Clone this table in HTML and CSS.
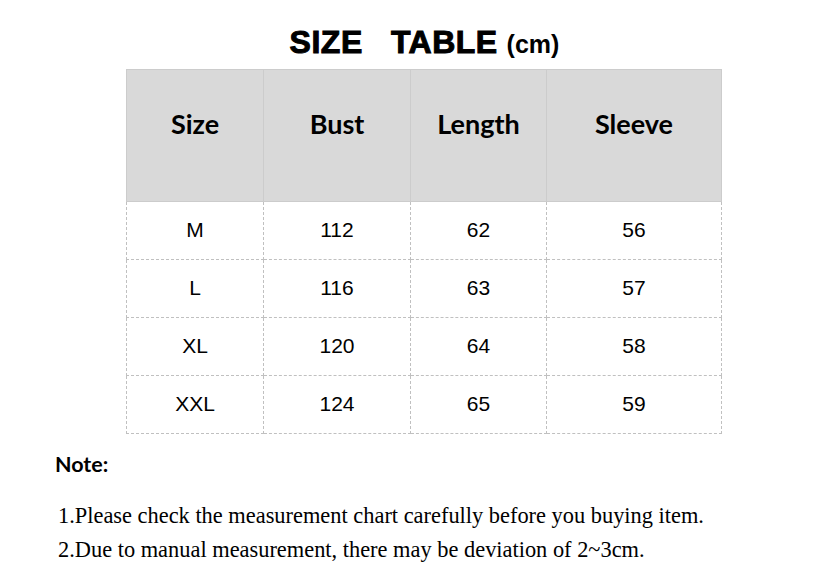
FILE: index.html
```html
<!DOCTYPE html>
<html>
<head>
<meta charset="utf-8">
<link rel="stylesheet" href="styles.css">
</head>
<body>
<div class="page">
  <h1 class="title"><span class="big">SIZE&nbsp;&nbsp;&nbsp;TABLE</span> <span class="unit">(cm)</span></h1>
  <table class="size-table">
    <colgroup>
      <col class="c1"><col class="c2"><col class="c3"><col class="c4">
    </colgroup>
    <thead>
      <tr><th>Size</th><th>Bust</th><th>Length</th><th>Sleeve</th></tr>
    </thead>
    <tbody>
      <tr><td>M</td><td>112</td><td>62</td><td>56</td></tr>
      <tr><td>L</td><td>116</td><td>63</td><td>57</td></tr>
      <tr><td>XL</td><td>120</td><td>64</td><td>58</td></tr>
      <tr><td>XXL</td><td>124</td><td>65</td><td>59</td></tr>
    </tbody>
  </table>
  <div class="note-title">Note:</div>
  <p class="note-line first">1.Please check the measurement chart carefully before you buying item.</p>
  <p class="note-line">2.Due to manual measurement, there may be deviation of 2~3cm.</p>
</div>
</body>
</html>
```

FILE: styles.css
```css
html, body {
  margin: 0;
  padding: 0;
  background: #ffffff;
}
.page {
  width: 823px;
  height: 576px;
  overflow: hidden;
}
.title {
  margin: 0 0 7px 0;
  padding: 22px 0 0 26px;
  height: 62px;
  box-sizing: border-box;
  text-align: center;
  font-family: "Liberation Sans", Arial, sans-serif;
  font-weight: bold;
  color: #000;
  line-height: 40px;
  white-space: nowrap;
}
.title .big {
  font-size: 32px;
  letter-spacing: 0.5px;
  -webkit-text-stroke: 1px #000;
}
.title .unit {
  font-size: 25px;
}
.size-table {
  margin: 0 0 0 126px;
  border-collapse: collapse;
  table-layout: fixed;
  width: 595px;
}
.c1 { width: 137px; }
.c2 { width: 147px; }
.c3 { width: 136px; }
.c4 { width: 175px; }
.size-table th {
  background: #d9d9d9;
  border: 1px solid #cccccc;
  height: 132px;
  box-sizing: border-box;
  padding: 0 0 25px 0;
  font-family: Lato, "Open Sans", sans-serif;
  font-weight: bold;
  font-size: 27px;
  color: #000;
  text-align: center;
  vertical-align: middle;
}
.size-table td {
  border: 1px dashed #c0c0c0;
  height: 58px;
  padding: 0 0 1px 0;
  box-sizing: border-box;
  font-family: "Liberation Sans", Arial, sans-serif;
  font-size: 21px;
  color: #000;
  text-align: center;
  vertical-align: middle;
}
.note-title {
  margin: 18px 0 0 55px;
  font-family: Lato, "Open Sans", sans-serif;
  font-weight: bold;
  font-size: 21.5px;
  line-height: 24px;
  color: #000;
}
.note-line {
  margin: 0 0 0 58px;
  font-family: "Liberation Serif", "Times New Roman", serif;
  font-size: 22.4px;
  line-height: 34px;
  color: #000;
  white-space: nowrap;
}
.note-line.first {
  margin-top: 23px;
}
```
